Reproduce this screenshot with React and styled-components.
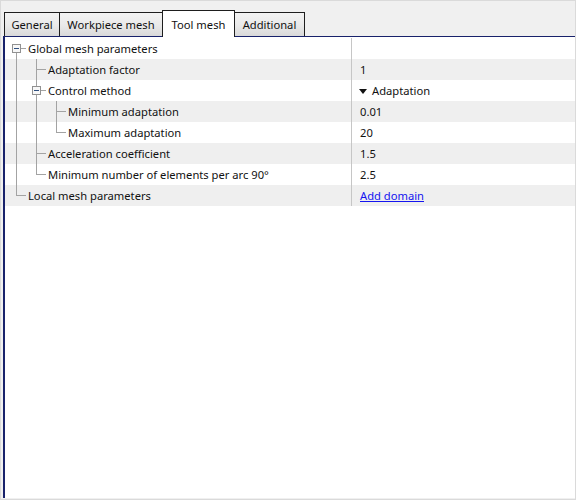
import React from "react";
import styled, { createGlobalStyle } from "styled-components";

const GlobalStyle = createGlobalStyle`
  html, body {
    margin: 0;
    padding: 0;
    background: #f0f0f0;
  }
  body {
    font-family: "Noto Sans", "Open Sans", "DejaVu Sans", sans-serif;
    font-size: 11.2px;
    color: #111;
  }
`;

const LINE = "#a3a3a3";

const tabs = [
  { title: "General", width: 56 },
  { title: "Workpiece mesh", width: 104 },
  { title: "Tool mesh", width: 73, active: true },
  { title: "Additional", width: 71 },
];

const rows = [
  { label: "Global mesh parameters", guides: ["boxFirst"], value: "" },
  { label: "Adaptation factor", guides: ["pipe", "tee"], value: "1" },
  { label: "Control method", guides: ["pipe", "boxTee"], value: "Adaptation", kind: "select" },
  { label: "Minimum adaptation", guides: ["pipe", "pipe", "tee"], value: "0.01" },
  { label: "Maximum adaptation", guides: ["pipe", "pipe", "elbow"], value: "20" },
  { label: "Acceleration coefficient", guides: ["pipe", "tee"], value: "1.5" },
  { label: "Minimum number of elements per arc 90°", guides: ["pipe", "elbow"], value: "2.5" },
  { label: "Local mesh parameters", guides: ["elbow"], value: "Add domain", kind: "link" },
];

// one 20px indent column of the tree, drawn as lines
function Guide({ kind }) {
  const hasBox = kind === "boxFirst" || kind === "boxTee";
  return (
    <GuideCell>
      <svg width="20" height="21" shapeRendering="crispEdges">
        {(kind === "pipe" || kind === "tee") && (
          <line x1="10.5" y1="0" x2="10.5" y2="21" stroke={LINE} />
        )}
        {kind === "elbow" && <line x1="10.5" y1="0" x2="10.5" y2="11" stroke={LINE} />}
        {(kind === "tee" || kind === "elbow") && (
          <line x1="10" y1="10.5" x2="20" y2="10.5" stroke={LINE} />
        )}
        {kind === "boxTee" && <line x1="10.5" y1="0" x2="10.5" y2="6" stroke={LINE} />}
        {hasBox && (
          <>
            <line x1="10.5" y1="15" x2="10.5" y2="21" stroke={LINE} />
            <line x1="15" y1="10.5" x2="20" y2="10.5" stroke={LINE} />
            <rect x="6.5" y="6.5" width="8" height="8" fill="#f7f7f7" stroke="#919191" />
            <line x1="8" y1="10.5" x2="13" y2="10.5" stroke="#2f4f7f" />
          </>
        )}
      </svg>
    </GuideCell>
  );
}

export default function App() {
  return (
    <>
      <GlobalStyle />
      <Window>
        <TabStrip>
          {tabs.map((t) => (
            <Tab key={t.title} $active={t.active} $w={t.width}>
              {t.title}
            </Tab>
          ))}
        </TabStrip>
        <Panel>
          <Grid>
            {rows.map((r, i) => (
              <Row key={r.label} $alt={i % 2 === 1}>
                <NameCell>
                  {r.guides.map((g, j) => (
                    <Guide key={j} kind={g} />
                  ))}
                  <Label>{r.label}</Label>
                </NameCell>
                <ValueCell>
                  {r.kind === "select" && <DropArrow />}
                  {r.kind === "link" ? <Link href="#">{r.value}</Link> : r.value}
                </ValueCell>
              </Row>
            ))}
          </Grid>
        </Panel>
      </Window>
    </>
  );
}

const Window = styled.div`
  width: 576px;
  height: 500px;
  box-sizing: border-box;
  border: 1px solid #dadada;
  background: #f0f0f0;
  padding: 9px 0 1px 2px;
  display: flex;
  flex-direction: column;
`;

const TabStrip = styled.div`
  height: 26px;
  display: flex;
  align-items: flex-end;
  padding-left: 1px;
`;

const Tab = styled.div`
  box-sizing: border-box;
  width: ${(p) => p.$w}px;
  height: ${(p) => (p.$active ? 27 : 24)}px;
  margin-left: -1px;
  margin-bottom: ${(p) => (p.$active ? -1 : 0)}px;
  &:first-child {
    margin-left: 0;
  }
  position: relative;
  z-index: ${(p) => (p.$active ? 2 : 1)};
  border: 1px solid #1e1e1e;
  border-bottom: none;
  background: ${(p) =>
    p.$active ? "#fff" : "linear-gradient(#f3f3f3, #e9e9e9 55%, #d9d9d9)"};
  display: flex;
  align-items: center;
  justify-content: center;
  padding-top: ${(p) => (p.$active ? 1 : 0)}px;
  color: #111;
  white-space: nowrap;
`;

const Panel = styled.div`
  flex: 1;
  background: #fff;
  border-top: 1px solid #18226b;
  border-left: 2px solid #18226b;
  padding-top: 1px;
`;

const Grid = styled.div`
  display: flex;
  flex-direction: column;
`;

const Row = styled.div`
  height: 21px;
  display: flex;
  background: ${(p) => (p.$alt ? "#efefef" : "#fff")};
`;

const NameCell = styled.div`
  width: 346px;
  box-sizing: border-box;
  padding-left: 1px;
  display: flex;
  align-items: center;
`;

const GuideCell = styled.div`
  width: 20px;
  height: 21px;
  flex: none;
  svg {
    display: block;
  }
`;

const Label = styled.span`
  padding-left: 2px;
  white-space: nowrap;
  line-height: 21px;
`;

const ValueCell = styled.div`
  flex: 1;
  border-left: 1px solid #c6c6c6;
  padding-left: 8px;
  display: flex;
  align-items: center;
  line-height: 21px;
  white-space: nowrap;
`;

const DropArrow = styled.span`
  width: 0;
  height: 0;
  border-left: 4px solid transparent;
  border-right: 4px solid transparent;
  border-top: 5px solid #111;
  margin: 1px 5px 0 -1px;
`;

const Link = styled.a`
  color: #1414f0;
  text-decoration: underline;
`;
